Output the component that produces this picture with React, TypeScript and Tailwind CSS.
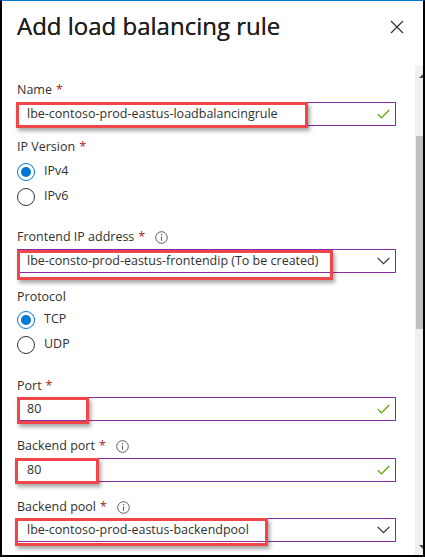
import React from "react";

const Req = () => <span className="text-[#a4262c] ml-[4px]">*</span>;

const Info = () => (
  <svg width="13" height="13" viewBox="0 0 13 13" className="ml-[10px]">
    <circle cx="6.5" cy="6.5" r="5.8" fill="none" stroke="#605e5c" strokeWidth="1" />
    <line x1="6.5" y1="5.6" x2="6.5" y2="9.8" stroke="#605e5c" strokeWidth="1.1" />
    <circle cx="6.5" cy="3.7" r="0.75" fill="#605e5c" />
  </svg>
);

const Check = () => (
  <svg width="13" height="10" viewBox="0 0 13 10" className="shrink-0">
    <path d="M0.8 5.2 L4.4 8.8 L12.2 1" fill="none" stroke="#57a300" strokeWidth="1.2" />
  </svg>
);

const Chevron = () => (
  <svg width="13" height="8" viewBox="0 0 13 8" className="shrink-0">
    <path d="M0.6 0.8 L6.5 6.7 L12.4 0.8" fill="none" stroke="#323130" strokeWidth="1.2" />
  </svg>
);

type FieldProps = {
  label: string;
  required?: boolean;
  info?: boolean;
  value: string;
  kind: "check" | "select";
  boxClass: string;
  className?: string;
  inputGap?: string;
};

const Field = ({ label, required, info, value, kind, boxClass, className, inputGap }: FieldProps) => (
  <div className={className}>
    <div className="h-5 flex items-center text-[#323130]">
      <span>{label}</span>
      {required && <Req />}
      {info && <Info />}
    </div>
    <div className={`relative h-6 border border-[#8a2da5] flex items-center pl-[9px] pr-[5px] ${inputGap ?? "mt-[2px]"}`}>
      <span className="flex-1 text-[#323130] whitespace-nowrap">{value}</span>
      {kind === "check" ? <Check /> : <Chevron />}
      <div className={`absolute border-[3px] border-[#f0464a] shadow-[2px_3px_4px_rgba(0,0,0,0.35)] ${boxClass}`} />
    </div>
  </div>
);

const Radio = ({ label, checked }: { label: string; checked?: boolean }) => (
  <div className="h-[25px] flex items-center">
    <div
      className={`w-[18px] h-[18px] rounded-full border flex items-center justify-center ${
        checked ? "border-[#0078d4]" : "border-[#323130]"
      }`}
    >
      {checked && <div className="w-[10px] h-[10px] rounded-full bg-[#0078d4]" />}
    </div>
    <span className="ml-[9px] text-[#323130]">{label}</span>
  </div>
);

export default function App() {
  return (
    <div className="w-[425px] h-[560px] bg-white font-['Open_Sans',sans-serif] text-[12.5px]">
      <div className="h-[557px] border-l-2 border-r-2 border-b-2 border-black border-t border-t-[#0078d4] flex flex-col">
        <div className="h-[65px] shrink-0 flex items-start justify-between pl-[15px] pr-[19px] pt-[6px]">
          <h1 className="text-[24px] text-[#201f1e] leading-[38px] [text-shadow:0_0_0.4px_#201f1e]">
            Add load balancing rule
          </h1>
          <svg width="14" height="14" viewBox="0 0 14 14" className="mt-[13px]">
            <path d="M1 1 L13 13 M13 1 L1 13" stroke="#323130" strokeWidth="1.2" />
          </svg>
        </div>
        <div className="flex-1 flex min-h-0">
          <div className="flex-1 pl-[15px] pr-[19px] pt-[14px]">
            <Field
              label="Name"
              required
              value="lbe-contoso-prod-eastus-loadbalancingrule"
              kind="check"
              boxClass="-left-[2px] -top-[1px] w-[292px] h-[26px]"
            />

            <div className="mt-[11px] h-5 flex items-center text-[#323130]">
              <span>IP Version</span>
              <Req />
            </div>
            <div className="mt-[2px]">
              <Radio label="IPv4" checked />
              <Radio label="IPv6" />
            </div>

            <Field
              className="mt-[18px]"
              label="Frontend IP address"
              required
              info
              value="lbe-consto-prod-eastus-frontendip (To be created)"
              kind="select"
              boxClass="-left-[1px] top-0 w-[316px] h-[30px]"
            />

            <div className="mt-[14px] h-5 flex items-center text-[#323130]">Protocol</div>
            <div>
              <Radio label="TCP" checked />
              <Radio label="UDP" />
            </div>

            <Field
              className="mt-[19px]"
              label="Port"
              required
              value="80"
              kind="check"
              inputGap="mt-[1px]"
              boxClass="-left-[1px] -top-[1px] w-[72px] h-[27px]"
            />
            <Field
              className="mt-[15px]"
              label="Backend port"
              required
              info
              value="80"
              kind="check"
              boxClass="-left-[3px] -top-[1px] w-[84px] h-[26px]"
            />
            <Field
              className="mt-[15px]"
              label="Backend pool"
              required
              info
              value="lbe-contoso-prod-eastus-backendpool"
              kind="select"
              inputGap="mt-[1px]"
              boxClass="-left-[3px] -top-[1px] w-[253px] h-[28px]"
            />
          </div>
          <div className="w-[8px] bg-[#f0f0f0] flex flex-col items-end pt-[8px] pb-[6px]">
            <div className="w-0 h-0 border-l-[4px] border-l-transparent border-b-[4px] border-b-[#505050]" />
            <div className="mt-[58px] w-[7px] h-[193px] bg-[#c1c1c1]" />
            <div className="flex-1" />
            <div className="w-0 h-0 border-l-[4px] border-l-transparent border-t-[4px] border-t-[#505050]" />
          </div>
        </div>
      </div>
    </div>
  );
}
